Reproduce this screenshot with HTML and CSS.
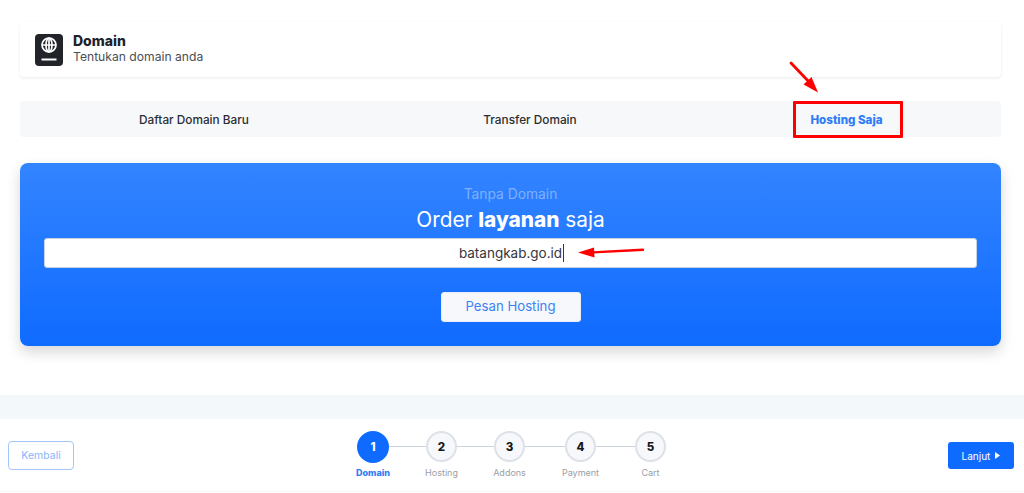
FILE: index.html
```html
<!DOCTYPE html>
<html lang="id">
<head>
<meta charset="utf-8">
<title>Domain</title>
<link rel="stylesheet" href="styles.css">
</head>
<body>
<main class="page">
  <section class="head-card">
    <div class="head-icon">
      <svg width="18" height="26" viewBox="0 0 18 26" fill="none" stroke="#fff" stroke-width="1.7">
        <circle cx="9" cy="8" r="7"/>
        <ellipse cx="9" cy="8" rx="3" ry="7"/>
        <path d="M2 8h14M9 1v14" />
        <path d="M1.5 22.5h15" stroke-width="2"/>
      </svg>
    </div>
    <div class="head-text">
      <h1 class="head-title">Domain</h1>
      <p class="head-sub">Tentukan domain anda</p>
    </div>
  </section>

  <nav class="tabs">
    <a class="tab">Daftar Domain Baru</a>
    <a class="tab">Transfer Domain</a>
    <a class="tab tab-active">Hosting Saja</a>
  </nav>

  <section class="hero">
    <p class="hero-kicker">Tanpa Domain</p>
    <h2 class="hero-title">Order <b>layanan</b> saja</h2>
    <div class="hero-input"><span class="hero-value">batangkab.go.id</span></div>
    <button class="hero-btn">Pesan Hosting</button>
  </section>

  <div class="band"></div>

  <footer class="footer">
    <button class="btn-back">Kembali</button>
    <ol class="steps">
      <li class="step step-done"><span class="dot">1</span><span class="label">Domain</span></li>
      <li class="line line-1"></li>
      <li class="step"><span class="dot">2</span><span class="label">Hosting</span></li>
      <li class="line line-2"></li>
      <li class="step"><span class="dot">3</span><span class="label">Addons</span></li>
      <li class="line line-3"></li>
      <li class="step"><span class="dot">4</span><span class="label">Payment</span></li>
      <li class="line line-4"></li>
      <li class="step"><span class="dot">5</span><span class="label">Cart</span></li>
    </ol>
    <button class="btn-next">Lanjut <svg class="caret" width="5" height="7" viewBox="0 0 5 7"><path d="M0 0l5 3.5L0 7z" fill="#fff"/></svg></button>
  </footer>
</main>

<div class="mark-box"></div>
<svg class="mark-arrow-a" width="34" height="36" viewBox="0 0 34 36">
  <path d="M2 2L22 23" stroke="#f00" stroke-width="2.8" stroke-linecap="round"/>
  <path d="M29 31.500L14.500 23.500L22.500 16z" fill="#f00"/>
</svg>
<svg class="mark-arrow-b" width="68" height="14" viewBox="0 0 68 14">
  <path d="M16 7.400L66 4.800" stroke="#f00" stroke-width="2.400" stroke-linecap="round"/>
  <path d="M1 7.500L17 2.500L17.500 12.500z" fill="#f00"/>
</svg>
</body>
</html>
```
FILE: styles.css
```css
* { box-sizing: border-box; }
html, body { margin: 0; padding: 0; background: #fff; }
body {
  width: 1024px;
  height: 493px;
  overflow: hidden;
  position: relative;
  font-family: "Inter", "Open Sans", sans-serif;
  color: #212529;
}
.page { display: flex; flex-direction: column; padding-top: 22px; }

.head-card {
  margin: 0 23px 0 20px;
  height: 55px;
  display: flex;
  align-items: center;
  gap: 10px;
  padding: 0 15px;
  background: #fff;
  border-radius: 4px;
  box-shadow: 0 1px 3px rgba(0,0,0,.09);
}
.head-icon {
  width: 28px;
  height: 32px;
  background: #212529;
  border-radius: 4px;
  display: flex;
  align-items: center;
  justify-content: center;
}
.head-text { display: flex; flex-direction: column; padding-bottom: 2px; }
.head-title { margin: 0; font-size: 14px; line-height: 16px; font-weight: 800; color: #1e2329; }
.head-sub { margin: 0; font-size: 12.150px; line-height: 16px; color: #4a4f55; }

.tabs {
  margin: 24px 23px 0 20px;
  height: 36px;
  display: grid;
  grid-template-columns: 348fr 324fr 309fr;
  background: #f7f8fa;
  border-radius: 4px;
}
.tab {
  display: flex;
  align-items: center;
  justify-content: center;
  padding-top: 2px;
  font-size: 11.800px;
  color: #2a2e33;
  font-weight: 500;
}
.tab-active { color: #2f7df6; font-weight: 800; font-size: 11.600px; }

.hero {
  margin: 26px 23px 0 20px;
  height: 183px;
  display: flex;
  flex-direction: column;
  align-items: center;
  padding: 23px 24px 0;
  border-radius: 8px;
  background: linear-gradient(180deg, #3384ff 0%, #0f6bff 100%);
  box-shadow: 0 6px 14px rgba(0,0,0,.16);
}
.hero-kicker { margin: 0; font-size: 13.800px; line-height: 17px; color: #7fb0fb; }
.hero-title { margin: 4px 0 0; font-size: 20.800px; line-height: 26px; font-weight: 400; color: #fff; }
.hero-title b { font-weight: 800; }
.hero-input {
  margin-top: 5px;
  width: 933px;
  height: 30px;
  background: #fff;
  border: 1px solid #c5d3e6;
  border-radius: 3px;
  display: flex;
  align-items: center;
  justify-content: center;
}
.hero-value {
  font-size: 13.500px;
  color: #33373c;
  padding-right: 1px;
  border-right: 1px solid #33373c;
  line-height: 18px;
  margin-left: 2px;
}
.hero-btn {
  margin-top: 24px;
  width: 140px;
  height: 30px;
  padding-bottom: 3px;
  border: 1px solid #e8eef7;
  border-radius: 3px;
  background: #f6f8fb;
  color: #3b82f6;
  font: 400 13.200px "Inter", "Open Sans", sans-serif;
}

.band { margin-top: 49px; height: 24px; background: #f3f8fb; }

.footer {
  height: 73px;
  display: flex;
  align-items: flex-start;
  justify-content: space-between;
  padding: 0 10px 0 8px;
  border-bottom: 1px solid #f1f4f8;
}
.btn-back {
  margin-top: 22px;
  width: 66px;
  height: 29px;
  background: #fff;
  border: 1px solid #a3c6fb;
  border-radius: 4px;
  color: #8ab5fa;
  font: 400 10.500px "Inter", "Open Sans", sans-serif;
}
.btn-next {
  margin-top: 23px;
  width: 66px;
  height: 27px;
  background: #0f6bff;
  border: 0;
  border-radius: 3px;
  color: #fff;
  font: 400 10px "Inter", "Open Sans", sans-serif;
  display: flex;
  align-items: center;
  justify-content: center;
  gap: 5px;
}
.steps {
  list-style: none;
  margin: 12px 0 0 1px;
  padding: 0;
  display: flex;
  align-items: flex-start;
}
.step {
  width: 31px;
  display: flex;
  flex-direction: column;
  align-items: center;
}
.dot {
  width: 31px;
  height: 31px;
  border-radius: 50%;
  border: 2px solid #dde1e8;
  background: #f6f8fb;
  display: flex;
  align-items: center;
  justify-content: center;
  font-size: 11.500px;
  font-weight: 800;
  color: #14171a;
}
.label {
  margin-top: 5px;
  font-size: 9px;
  line-height: 12px;
  color: #9a9ea5;
  white-space: nowrap;
}
.step-done { width: 32px; }
.step-done .dot { width: 32px; height: 32px; background: #0f6bff; border-color: #0f6bff; color: #fff; }
.step-done .label { margin-top: 4px; color: #2f7df6; font-weight: 800; }
.line { height: 1px; margin-top: 15px; background: #cdd4de; }
.line-1 { width: 37px; }
.line-2 { width: 37px; }
.line-3 { width: 40px; }
.line-4 { width: 39px; }

.mark-box {
  position: absolute;
  left: 793px;
  top: 101px;
  width: 110px;
  height: 37px;
  border: 3px solid #f00;
  border-radius: 1px;
}
.mark-arrow-a { position: absolute; left: 789px; top: 61px; }
.mark-arrow-b { position: absolute; left: 577px; top: 245px; }
```
